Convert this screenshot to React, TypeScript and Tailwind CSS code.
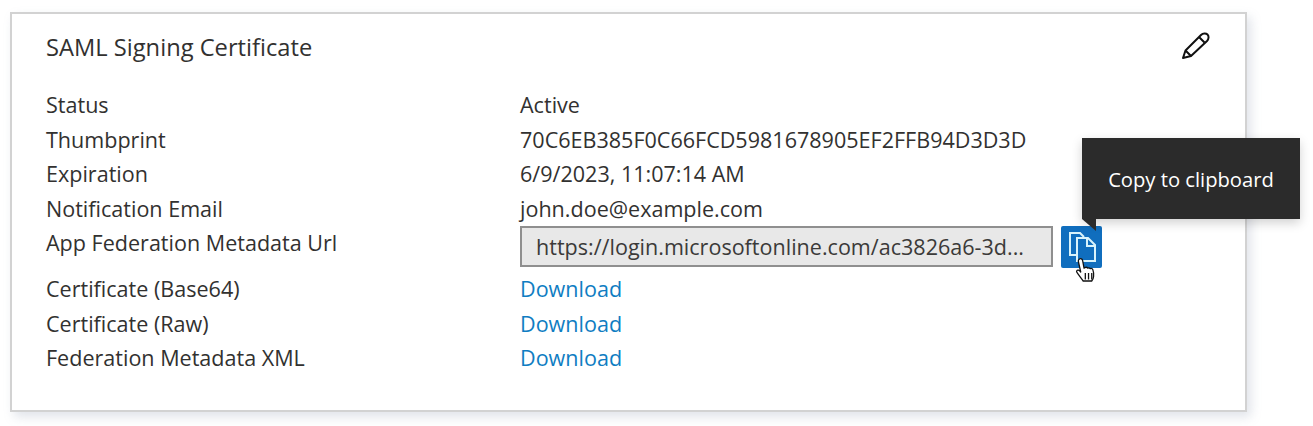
import React from "react";

const font = { fontFamily: '"Open Sans", sans-serif' };

function Row({ label, children, tall }: { label: string; children: React.ReactNode; tall?: boolean }) {
  return (
    <div className={tall ? "flex h-[46px]" : "flex h-[34.5px] items-center"}>
      <div className="w-[474px] shrink-0 leading-[34.5px]">{label}</div>
      <div className="min-w-0 flex-1 leading-[34.5px]">{children}</div>
    </div>
  );
}

const Link = () => <span className="text-[#0f7dc2]">Download</span>;

export default function App() {
  return (
    <div className="h-[426px] w-[1313px] overflow-hidden bg-white pl-[9.5px] pt-[12px]" style={font}>
      <div className="relative h-[400px] w-[1237.5px] border-2 border-[#d2d2d2] pl-[34.5px] pr-[34px] pt-[13px] text-[21.55px] text-[#323130] shadow-[4px_5px_10px_rgba(120,130,160,0.22)]">
        <div className="flex h-[40px] items-center justify-between">
          <h1 className="text-[23.7px] font-normal leading-[40px] text-[#323130]">SAML Signing Certificate</h1>
          <svg width="32" height="32" viewBox="0 0 32 32" fill="none" className="mr-[-1px] mt-[-4px]" stroke="#111111" strokeWidth="2" strokeLinejoin="round">
            <path d="M3 29l2.500-7.500L21 6c2-2 5-2 6.500-.5s1.500 4.500-.5 6.500L11 27z" />
            <path d="M5.500 21.500l5.500 5.500M19 8l5.500 5.500" />
          </svg>
        </div>
        <div className="mt-[21px]">
          <Row label="Status">Active</Row>
          <Row label="Thumbprint">70C6EB385F0C66FCD5981678905EF2FFB94D3D3D</Row>
          <Row label="Expiration">6/9/2023, 11:07:14 AM</Row>
          <Row label="Notification Email">john.doe@example.com</Row>
          <Row label="App Federation Metadata Url" tall>
            <div className="flex items-start gap-2">
              <div className="flex h-[41px] w-[533px] items-center truncate border-2 border-[#8f8f8f] bg-[#e8e8e8] pb-0 pl-[14px] pr-[10px] pt-[1px] text-[#3b3a39]">
                <span className="truncate">https://login.microsoftonline.com/ac3826a6-3d...</span>
              </div>
              <div className="relative h-[42px] w-[41px] rounded-[2px] bg-[#106ebe]">
                <svg width="41" height="42" viewBox="0 0 41 42" fill="none" stroke="#d8f3fb" strokeWidth="2">
                  <path d="M16 29H9V7h10l4 4" />
                  <path d="M16 12h11l7 7v16H16z" fill="#106ebe" />
                  <path d="M26 12v8h8" />
                </svg>
                <svg width="30" height="35" viewBox="0 0 28 32" className="absolute left-[12px] top-[30px]" stroke="#111" strokeWidth="1.2" fill="#fff" strokeLinejoin="round">
                  <path d="M6 2.500c1.300-1 2.700 0 3 1.400l1.300 7 1.400-.6c1-.4 1.700.2 2 .7 1-.5 1.900-.2 2.400.5 1-.4 2-.1 2.400.9.700 2 1 4 .7 6.300-.2 2-.8 3.300-1.700 4.300H9.500C8 21 5.500 17.500 3.700 15c-.8-1.100-.1-2.300 1.300-2.100.8.100 1.500.8 2.200 1.700L5 4.800C4.800 3.900 5.300 3 6 2.500z" />
                  <path d="M11.500 15.500v6M14.500 15.500v6M17.500 15.500v6" fill="none" />
                </svg>
              </div>
            </div>
          </Row>
          <Row label="Certificate (Base64)"><Link /></Row>
          <Row label="Certificate (Raw)"><Link /></Row>
          <Row label="Federation Metadata XML"><Link /></Row>
        </div>
        <div className="absolute left-[1070.5px] top-[124px] flex h-[81px] w-[218px] items-center justify-center bg-[#2b2b2b] pt-[2px] text-[20.2px] text-white shadow-[0_4px_10px_rgba(0,0,0,0.18)]">
          Copy to clipboard
          <div className="absolute left-0 top-full h-0 w-0 border-l-[14px] border-t-[12px] border-l-transparent border-t-[#2b2b2b]" />
        </div>
      </div>
    </div>
  );
}
